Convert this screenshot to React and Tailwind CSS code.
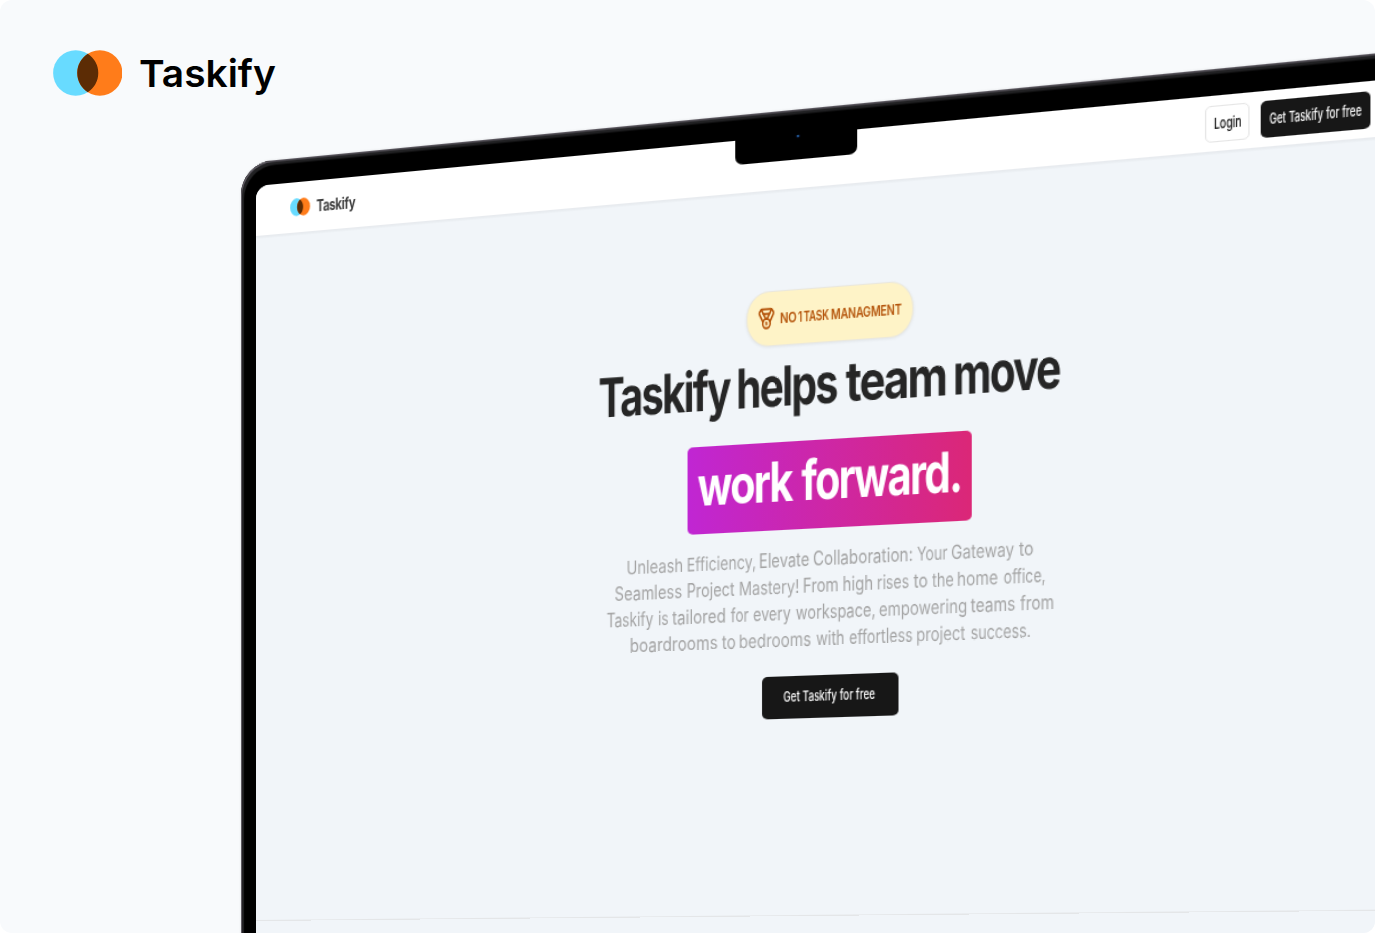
import { useLayoutEffect, useRef } from "react";
import { Medal } from "lucide-react";

// Depth of the tilted display: vertical scale grows by TILT per pixel to the right.
const TILT = 0.00011585;
const SCREEN_LEFT = 256;

// Converts a stage x coordinate into the flat coordinate of the display.
const flat = (x) => (x - SCREEN_LEFT) / (1 + TILT * (x - SCREEN_LEFT));

// Text squeezed or stretched so that its ink fills exactly `width`.
function Fit({ children, width, className = "" }) {
  const ref = useRef(null);
  useLayoutEffect(() => {
    const el = ref.current;
    const cs = getComputedStyle(el);
    const ctx = document.createElement("canvas").getContext("2d");
    ctx.font = `${cs.fontWeight} ${cs.fontSize} ${cs.fontFamily}`;
    ctx.letterSpacing = cs.letterSpacing === "normal" ? "0px" : cs.letterSpacing;
    const m = ctx.measureText(children);
    const scale = width / (m.actualBoundingBoxLeft + m.actualBoundingBoxRight);
    el.style.transform = `translateX(${m.actualBoundingBoxLeft * scale}px) scaleX(${scale})`;
  }, [children, width]);
  return (
    <span className={`block shrink-0 ${className}`} style={{ width }}>
      <span ref={ref} className="block w-max origin-left whitespace-nowrap">
        {children}
      </span>
    </span>
  );
}

// A row of words, each given as [text, left, right] on the stage.
function Words({ words, from = SCREEN_LEFT, className = "" }) {
  return (
    <div className={`flex items-center ${className}`}>
      {words.map(([text, left, right], i) => {
        const prev = i === 0 ? from : words[i - 1][2];
        return (
          <div key={i} className="shrink-0" style={{ marginLeft: flat(left) - flat(prev) }}>
            <Fit width={flat(right) - flat(left)}>{text}</Fit>
          </div>
        );
      })}
    </div>
  );
}

function Mark({ className }) {
  return (
    <svg viewBox="0 0 70 46" preserveAspectRatio="none" className={className} aria-hidden="true">
      <circle cx="22.8" cy="23" r="22.7" fill="#68dbff" />
      <circle cx="47.1" cy="23" r="22.7" fill="#ff7c1a" />
      <path d="M34.95 3.8a22.7 22.7 0 0 1 0 38.4a22.7 22.7 0 0 1 0-38.4Z" fill="#5c2c05" />
    </svg>
  );
}

const headline = [
  ["Taskify", 598.6, 730.7],
  ["helps", 739, 838],
  ["team", 845.4, 945.7],
  ["move", 955, 1060.3],
];

const highlight = [
  ["work", 697.8, 793.8],
  ["forward.", 801.3, 960.3],
];

const badge = [
  ["NO", 780.3, 796.8],
  ["1", 797.8, 801.6],
  ["TASK", 803.7, 829.2],
  ["MANAGMENT", 831, 901.9],
];

const paragraph = [
  [
    ["Unleash", 627, 682.3], ["Efficiency,", 687.6, 755.3], ["Elevate", 760.3, 809.5],
    ["Collaboration:", 814.4, 912.5], ["Your", 917.3, 948], ["Gateway", 952.5, 1014.7], ["to", 1019.3, 1033.3],
  ],
  [
    ["Seamless", 615.8, 682.3], ["Project", 687.6, 734.7], ["Mastery!", 739.6, 798.3],
    ["From", 803.6, 838], ["high", 843.3, 872.5], ["rises", 878, 909], ["to", 913.3, 927],
    ["the", 931.7, 953], ["home", 958.4, 998.3], ["office,", 1003.3, 1044.5],
  ],
  [
    ["Taskify", 606.7, 653.3], ["is", 658.8, 668], ["tailored", 672.3, 725.3], ["for", 730.3, 748.3],
    ["every", 753, 790.7], ["workspace,", 795.3, 874.3], ["empowering", 878.8, 966.3],
    ["teams", 971.3, 1015.7], ["from", 1020.3, 1053.6],
  ],
  [
    ["boardrooms", 630.2, 717], ["to", 721.7, 735], ["bedrooms", 740.2, 811.3], ["with", 816.3, 844.2],
    ["effortless", 849, 912.1], ["project", 917.6, 966], ["success.", 970.7, 1030],
  ],
];

function Navbar() {
  return (
    <nav className="flex h-[50.4px] shrink-0 items-center border-b border-[#e8ebef] bg-white pr-[26px] pl-[33.8px] shadow-[0_1px_2px_0_rgba(0,0,0,0.05)]">
      <Mark className="h-[17.8px] w-[19.8px]" />
      <Fit width={39} className="mt-px ml-[6px] text-[15.5px] leading-6 font-bold tracking-[-0.03em] text-[#404040]">
        Taskify
      </Fit>
      <div className="ml-auto flex items-center gap-[9.2px] pt-[0.8px]">
        <button className="flex h-[32.4px] w-[35.6px] items-center justify-center rounded-[5px] border border-[#e5e5e5] bg-white text-[13px] font-medium text-[#0a0a0a]">
          <Fit width={21}>Login</Fit>
        </button>
        <button className="flex h-[32.6px] w-[86.4px] items-center justify-center rounded-[5px] bg-[#171717] text-[13px] font-medium text-[#fafafa]">
          <Fit width={73.3} className="pt-[0.6px]">
            Get Taskify for free
          </Fit>
        </button>
      </div>
    </nav>
  );
}

function Hero() {
  return (
    <main className="flex h-[684px] flex-col items-start border-b border-[#e4e6e8] pt-[94.6px]">
      <div className="ml-[464.1px] flex h-[51.6px] w-[147px] items-center rounded-[20px/25px] border border-[#ebe8dc] bg-[#fef3c7] pb-[1px] pl-[9.3px] text-[#b45309] shadow-[0_1px_3px_0_rgba(0,0,0,0.07)]">
        <Medal className="h-[21.6px] w-[15.9px] shrink-0" preserveAspectRatio="none" strokeWidth={2.2} />
        <Words words={badge} from={775.6} className="text-[13.5px] leading-6 font-semibold tracking-[-0.02em]" />
      </div>
      <Words
        words={headline}
        className="mt-[7.2px] h-16 text-[52px] leading-[64px] font-bold tracking-[-0.045em] text-[#262626]"
      />
      <div className="mt-[19.9px] ml-[411.4px] flex h-[83.2px] w-[249.8px] items-center rounded-[5px] bg-linear-to-r/srgb from-[#c026d3] to-[#db2777] pb-[7.2px]">
        <Words
          words={highlight}
          from={688}
          className="text-[52px] leading-[64px] font-bold tracking-[-0.045em] text-white"
        />
      </div>
      <div className="mt-[15.6px] text-[18px] leading-[25.2px] text-[#a3a3a3]">
        {paragraph.map((line, i) => (
          <Words key={i} words={line} className="h-[25.2px]" />
        ))}
      </div>
      <button className="mt-[21.1px] ml-[478px] flex h-[39.9px] w-[119.6px] items-center justify-center rounded-[5px] bg-[#171717] text-[13px] font-medium text-[#fafafa]">
        <Fit width={81} className="pt-[0.6px]">
          Get Taskify for free
        </Fit>
      </button>
    </main>
  );
}

function Laptop() {
  return (
    <div className="mt-[2px] ml-[241px] h-[900px] w-[1050px] shrink-0 origin-[15px_24.4px] [transform:matrix3d(1,-0.0942,0,-0.00011585,0,1,0,0,0,0,1,0,0,0,0,1)] rounded-tl-[31px] bg-black pt-[24.4px] pl-[15px] shadow-[inset_1px_1.5px_0_#5a565e,inset_3px_4.5px_1px_#222224,0_0_2px_1px_rgba(0,0,0,0.05)]">
      <div className="relative h-[874px] w-[1012.5px] overflow-hidden rounded-tl-[13px] bg-[#f1f5f9]">
        <Navbar />
        <Hero />
        <div className="absolute -top-2 left-[453.7px] flex h-[30.8px] w-[108.2px] rounded-b-[7px] bg-black pt-[6.3px] pl-[54px]">
          <span className="size-[4px] rounded-full border border-[#05091a] bg-[#2a6db0]" />
        </div>
      </div>
    </div>
  );
}

export default function App() {
  return (
    <div className="bg-white">
      <div className="flex h-[933px] w-[1375px] flex-col overflow-hidden rounded-[12px] bg-[#f8fafc] font-['Inter',sans-serif]">
        <header className="flex h-[160px] shrink-0 items-start pt-[50px] pl-[52.6px]">
          <Mark className="h-[46px] w-[69.6px]" />
          <Fit width={135.8} className="mt-px ml-[18px] text-[37.5px] leading-[46px] font-semibold text-black">
            Taskify
          </Fit>
        </header>
        <Laptop />
      </div>
    </div>
  );
}
